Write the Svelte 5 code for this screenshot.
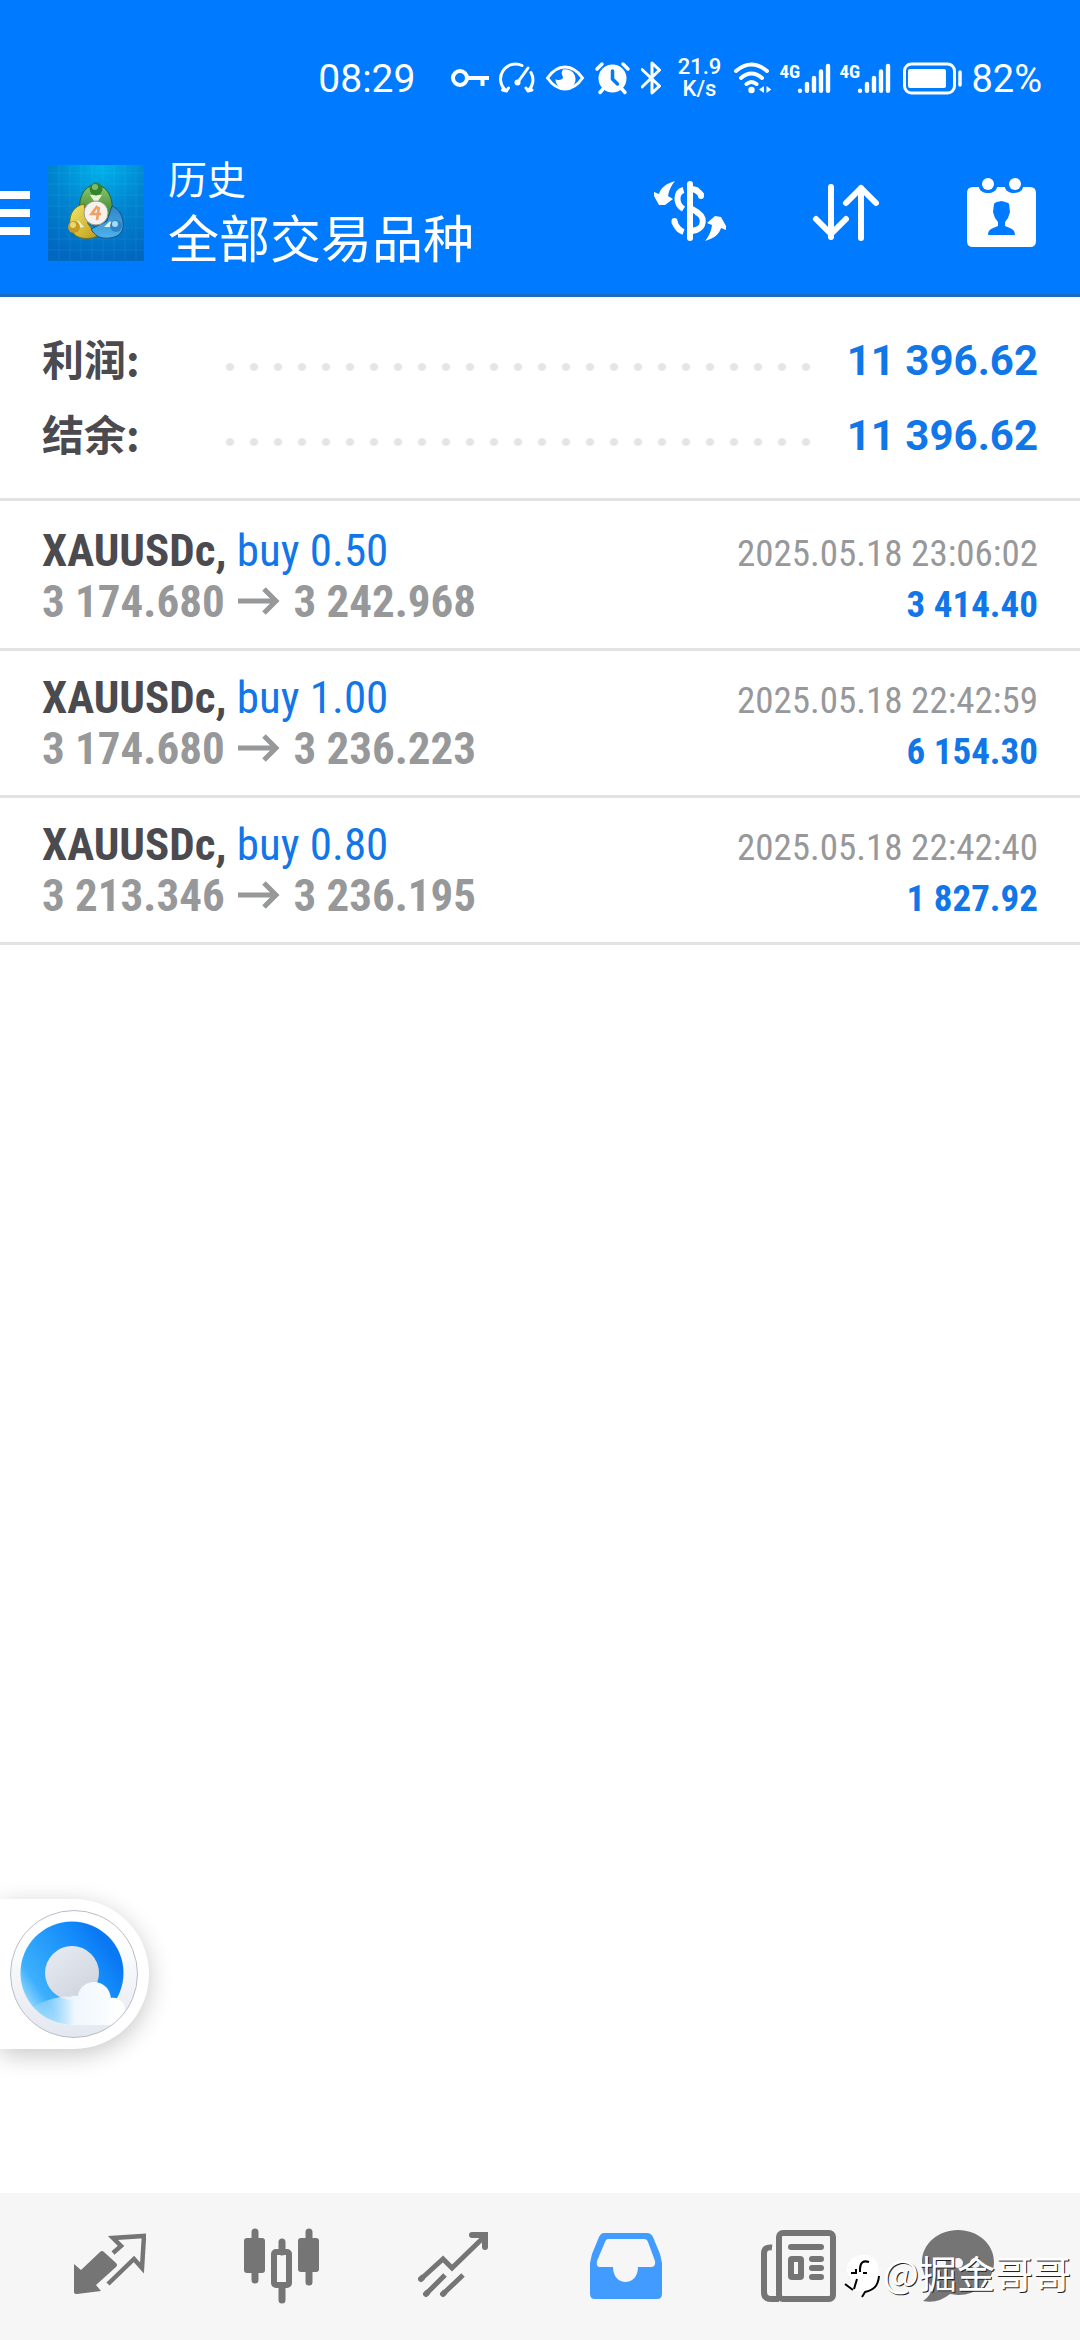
<script>
  const totals = [
    { label: '利润:', value: '11 396.62' },
    { label: '结余:', value: '11 396.62' }
  ];

  const deals = [
    { symbol: 'XAUUSDc,', side: 'buy 0.50', open: '3 174.680', close: '3 242.968', time: '2025.05.18 23:06:02', profit: '3 414.40' },
    { symbol: 'XAUUSDc,', side: 'buy 1.00', open: '3 174.680', close: '3 236.223', time: '2025.05.18 22:42:59', profit: '6 154.30' },
    { symbol: 'XAUUSDc,', side: 'buy 0.80', open: '3 213.346', close: '3 236.195', time: '2025.05.18 22:42:40', profit: '1 827.92' }
  ];
</script>

{#snippet signal()}
  <span class="signal">
    <span class="net">4G</span>
    <svg width="34" height="32" viewBox="0 0 34 32" fill="none" stroke="currentColor" stroke-width="4.4" stroke-linecap="round">
      <path d="M3 28.6v.2M10 22v6.8M17 16v12.8M24 9.500v19.300M31 4v24.800" />
    </svg>
  </span>
{/snippet}

<div class="app">
  <header>
    <div class="status">
      <time>08:29</time>
      <svg width="38" height="36" viewBox="0 0 38 36" fill="none" stroke="currentColor" stroke-width="4">
        <circle cx="9" cy="18" r="7" />
        <path d="M16 18h22M31.500 18v8" />
      </svg>
      <svg width="40" height="36" viewBox="0 0 40 36" fill="none" stroke="currentColor" stroke-width="3" stroke-linecap="round">
        <path d="M25 5.500A15 15 0 0 0 9.500 31M9.500 31l-4-1M9.500 31l2-3M34 12.500a15 15 0 0 1-3 18.500M31 31l4-1M31 31l-2-3" />
        <path d="M31 8L21 22" />
        <circle cx="20.500" cy="22.500" r="3" fill="currentColor" stroke="none" />
      </svg>
      <svg width="40" height="36" viewBox="0 0 40 36">
        <path d="M2.500 18C8 10 14 7 20 7s12 3 17.500 11C32 26 26 29 20 29S8 26 2.500 18z" fill="none" stroke="currentColor" stroke-width="3" />
        <path d="M18 9.500c-3 4 0 6 0 8-1 3-6 3-7.500 1.500A10 10 0 1 0 18 9.500z" fill="currentColor" />
      </svg>
      <svg width="40" height="36" viewBox="0 0 40 36">
        <circle cx="19.500" cy="18.500" r="14" fill="currentColor" />
        <path d="M4 9l5-5M30 4l5 5M10 29l-3 3.500M29 29l3 3.500" fill="none" stroke="currentColor" stroke-width="3.500" stroke-linecap="round" />
        <path d="M19.500 11v8l5 5" fill="none" stroke="#007aff" stroke-width="3.500" stroke-linecap="round" />
      </svg>
      <svg width="26" height="36" viewBox="0 0 26 36" fill="none" stroke="currentColor" stroke-width="3" stroke-linejoin="round" stroke-linecap="round">
        <path d="M1 9.500L18.500 26 11 33V3l7.500 7L1 27" />
      </svg>
      <span class="speed"><span>21.9</span><span>K/s</span></span>
      <svg width="40" height="36" viewBox="0 0 40 36" fill="none" stroke="currentColor" stroke-width="4" stroke-linecap="round">
        <path d="M5 11q15.500-13 31 0M10 18q10.500-9 21 0M15.500 24q5-4 10 0" />
        <circle cx="20.500" cy="30" r="3.200" fill="currentColor" stroke="none" />
        <path d="M33 26v7l-5-3.500zM35.500 26v7l5-3.500z" fill="currentColor" stroke="none" />
      </svg>
      {@render signal()}
      {@render signal()}
      <svg width="64" height="36" viewBox="0 0 64 36">
        <rect x="5.500" y="4" width="50" height="29" rx="7" fill="none" stroke="currentColor" stroke-width="3" />
        <rect x="9" y="9" width="38" height="19" rx="2" fill="currentColor" />
        <path d="M61 12v13" stroke="currentColor" stroke-width="3.500" stroke-linecap="round" />
      </svg>
      <span class="charge">82%</span>
    </div>

    <div class="bar">
      <button class="menu" aria-label="菜单">
        <svg width="30" height="45" viewBox="0 0 30 45" fill="currentColor">
          <path d="M0 0h30v8H0zM0 18h30v8H0zM0 36h30v8H0z" />
        </svg>
      </button>
      <svg class="logo" width="96" height="96" viewBox="0 0 96 96">
        <defs>
          <radialGradient id="sky" cx="0.550" cy="0" r="1">
            <stop offset="0" stop-color="#00b4ec" /><stop offset="0.500" stop-color="#0085d0" /><stop offset="1" stop-color="#0068c0" />
          </radialGradient>
          <linearGradient id="leaf" x2="0" y2="1"><stop stop-color="#8fc871" /><stop offset="1" stop-color="#2c7d24" /></linearGradient>
          <linearGradient id="gold" x2="1" y2="1"><stop stop-color="#f3e96a" /><stop offset="1" stop-color="#c09a18" /></linearGradient>
          <linearGradient id="azure" x2="0" y2="1"><stop stop-color="#2f86c4" /><stop offset="1" stop-color="#4fb1ec" /></linearGradient>
        </defs>
        <rect width="96" height="96" fill="url(#sky)" />
        <path d="M11 0v96M22 0v96M33 0v96M44 0v96M55 0v96M66 0v96M77 0v96M88 0v96M0 8h96M0 19h96M0 30h96M0 41h96M0 52h96M0 63h96M0 74h96M0 85h96" stroke="#8fe0ff" stroke-opacity="0.090" />
        <path d="M32 46c-2-16 6-26 16-26s18 12 16 28l-8 6-8-12-8 4z" fill="url(#leaf)" stroke="#25632a" />
        <path d="M36 39c-10 2-15 10-14 20 1 12 10 16 22 14l6-2-10-12z" fill="url(#gold)" stroke="#6d7325" />
        <path d="M64 41c8 3 12 12 11 22-2 8-10 11-20 10-6-1-10-5-12-9l16-8z" fill="url(#azure)" stroke="#15548e" />
        <path d="M42 30h12l-6 9zM30 55l-2 8 8-1zM62 56l4 6-10 0z" fill="#e7f2d8" />
        <circle cx="48" cy="24" r="6.500" fill="#34832d" /><circle cx="47" cy="22" r="3" fill="#81b86d" />
        <circle cx="26" cy="62" r="6" fill="#c79b21" /><circle cx="25" cy="60" r="3" fill="#ecd66d" />
        <circle cx="68" cy="61" r="6" fill="#2d83c5" /><circle cx="67" cy="59" r="3" fill="#a4dcfa" />
        <circle cx="48" cy="48" r="12" fill="#f5f1ed" stroke="#9c9a87" />
        <path d="M49.500 41l-6 8h9.500M51 42l-2 13" fill="none" stroke="#f0a060" stroke-width="2.600" />
      </svg>
      <h1><small>历史</small><span>全部交易品种</span></h1>
      <div class="actions">
        <button aria-label="货币">
          <svg width="72" height="72" viewBox="0 0 72 72">
            <path d="M21 6C11 9 7 13 5 19L0 17l0 4 5 9 6 0 8-6-5-3c1-6 3-10 7-15z" fill="currentColor" />
            <path d="M51 66c10-3 14-7 16-13l5 2 0-4-5-9-6-1-8 7 5 2c-1 7-3 11-7 16z" fill="currentColor" />
            <path d="M29.500 15C22 17 21 29 29.500 34M42 15q4 3 5.500 5.500M42 37c10 4 8 16 0 18M20.500 47q3 8 9 10" fill="none" stroke="currentColor" stroke-width="6" />
            <path d="M38 14l4 1M47 20v1M38 34l5 3M38 56l4-1M20.500 46v1" fill="none" stroke="currentColor" stroke-width="6" stroke-linecap="round" />
            <path d="M36 9v54" stroke="currentColor" stroke-width="6" stroke-linecap="round" />
          </svg>
        </button>
        <button aria-label="排序">
          <svg width="72" height="72" viewBox="0 0 72 72" fill="none" stroke="currentColor" stroke-width="6" stroke-linecap="round" stroke-linejoin="round">
            <path d="M21 12v50M6 44l15 15 15-15M51 63V13M36 28l15-15 15 15" />
          </svg>
        </button>
        <button aria-label="日期">
          <svg width="72" height="72" viewBox="0 0 72 72">
            <path d="M7 12h6c1 8 17 8 18 0h8c1 8 17 8 18 0h7q6 0 6 6v48q0 6-6 6H7q-6 0-6-6V18q0-6 6-6z" fill="currentColor" />
            <circle cx="22" cy="9" r="6" fill="currentColor" /><circle cx="49" cy="9" r="6" fill="currentColor" />
            <path d="M22 60c0-6 5-7 10-9v-4l-3-4-1-3-1-3 1-8c2-3 6-2 7-3 3 1 7 1 8 3l1 8-1 3-1 3-3 4v4c5 2 10 3 10 9z" fill="#007aff" />
          </svg>
        </button>
      </div>
    </div>
  </header>

  <main>
    <dl class="totals">
      {#each totals as total}
        <div>
          <dt>{total.label}</dt>
          <dd class="dots" aria-hidden="true"></dd>
          <dd class="sum">{total.value}</dd>
        </div>
      {/each}
    </dl>

    <ul class="deals">
      {#each deals as deal}
        <li>
          <div class="line">
            <span class="name"><b>{deal.symbol}</b> <span class="side">{deal.side}</span></span>
            <time>{deal.time}</time>
          </div>
          <div class="line">
            <span class="prices">{deal.open} <svg class="arrow" role="img" aria-label="→" width="42" height="28" viewBox="0 0 42 28" fill="none" stroke="currentColor" stroke-width="5"><path d="M0 14h38M26 2l12 12-12 12" /></svg> {deal.close}</span>
            <b class="profit">{deal.profit}</b>
          </div>
        </li>
      {/each}
    </ul>

    <button class="bubble" aria-label="浏览器">
      <svg width="130" height="130" viewBox="0 0 130 130">
        <defs>
          <linearGradient id="disc" x2="0" y2="1"><stop offset="0.200" stop-color="#fff" /><stop offset="1" stop-color="#e3e7ef" /></linearGradient>
          <linearGradient id="ring" x1="0.950" y1="0.400" x2="0.150" y2="0.950"><stop stop-color="#0a78f2" /><stop offset="0.200" stop-color="#128afa" /><stop offset="0.800" stop-color="#3cb0fd" /><stop offset="1" stop-color="#9fdcfe" /></linearGradient>
          <linearGradient id="hole" x2="0.700" y2="1"><stop stop-color="#e9ecf3" /><stop offset="1" stop-color="#cfd4de" /></linearGradient>
          <linearGradient id="cloud" x2="1" y2="0"><stop stop-color="#cdeeff" stop-opacity="0.100" /><stop offset="0.450" stop-color="#eff7fd" /><stop offset="1" stop-color="#fff" /></linearGradient>
          <clipPath id="round"><circle cx="65" cy="65" r="63" /></clipPath>
        </defs>
        <circle cx="65" cy="65" r="63.500" fill="url(#disc)" stroke="#b9bdc8" />
        <g clip-path="url(#round)">
          <circle cx="63" cy="64" r="51.500" fill="url(#ring)" />
          <circle cx="63" cy="64" r="27" fill="url(#hole)" />
          <path d="M24 98C34 92 52 86 61 88c3-2 7-1 8-1 2-18 30-20 33 2 8-2 15 6 14 13l-10 14H63q-24 0-39-18z" fill="url(#cloud)" />
        </g>
      </svg>
    </button>
  </main>

  <nav>
    <button aria-label="行情">
      <svg width="72" height="76" viewBox="0 0 72 76">
        <path d="M30 24q-2-2-4 0L7 42l-7-6v28q0 2 3 2l24-3-5-6 20-18q2-2 0-4z" fill="currentColor" />
        <path d="M39 25l8-7-8-8 31-2-2 32-8-9-26 25" fill="none" stroke="currentColor" stroke-width="4.500" />
      </svg>
    </button>
    <button aria-label="图表">
      <svg width="76" height="76" viewBox="0 0 76 76">
        <path d="M11 4v48M65 4v50M38 14v10M38 60v12" stroke="currentColor" stroke-width="7" stroke-linecap="round" />
        <rect x="0" y="10" width="21" height="35" rx="3" fill="currentColor" /><rect x="54" y="10" width="21" height="34" rx="3" fill="currentColor" />
        <rect x="30" y="24" width="15" height="33" rx="2" fill="none" stroke="currentColor" stroke-width="6" />
      </svg>
    </button>
    <button aria-label="交易">
      <svg width="72" height="76" viewBox="0 0 72 76" fill="none" stroke="currentColor" stroke-width="5">
        <path d="M3 51l22-20 9 9L67 8" /><path d="M3 51l1-1M54 7h13v12M8 66l1-1M25 66l1-1" stroke-linecap="round" stroke-width="6" />
        <path d="M8 66l19-19M25 66l20-19" />
      </svg>
    </button>
    <button class="active" aria-label="历史" aria-current="page">
      <svg width="72" height="76" viewBox="0 0 72 76">
        <path fill-rule="evenodd" d="M14 5h43q4 0 6 4l7 17 2 9v31q0 5-5 5H5q-5 0-5-5V35l2-9 7-17q2-4 5-4zm4 6q-2 0-3 3L7 33q-1 6 3 6h13c0 20 25 20 25 0h13q5 0 4-6L58 14q-1-3-4-3z" fill="currentColor" />
      </svg>
    </button>
    <button aria-label="新闻">
      <svg width="76" height="76" viewBox="0 0 76 76">
        <rect x="19" y="5" width="54" height="66" rx="4" fill="none" stroke="currentColor" stroke-width="6" />
        <path d="M12 19.500q-8-1-8 6V64q0 7 7 7h8" fill="none" stroke="currentColor" stroke-width="6" />
        <path d="M31 19h30M52 31h9M52 40h9M52 49h9" stroke="currentColor" stroke-width="6" stroke-linecap="round" />
        <rect x="31" y="31" width="10" height="18" rx="1" fill="none" stroke="currentColor" stroke-width="6" />
      </svg>
    </button>
    <button class="chat" aria-label="聊天">
      <svg width="72" height="76" viewBox="0 0 72 76">
        <path d="M36 2c20 0 36 14 36 32S57 67 36 67l-8-1Q16 76 1 73q8-5 9-14Q0 48 0 34C0 16 16 2 36 2z" fill="currentColor" />
        <circle cx="19" cy="35" r="5" fill="#f6f6f6" /><circle cx="36" cy="35" r="5" fill="#f6f6f6" /><circle cx="53" cy="35" r="5" fill="#f6f6f6" />
      </svg>
    </button>
    <p class="credit">
      <svg width="38" height="46" viewBox="0 0 38 46">
        <path d="M18 3C29 1 36 9 36 20c0 12-5 17-14 19l-3 5-1-5C9 40 3 37 1 30c5 4 8 1 8-3C-2 18 6 5 18 3z" fill="#fff" />
        <path d="M36 24c-1 11-6 14-14 16l-3 5M2 32l8 6" fill="none" stroke="#000" stroke-width="2" />
        <path d="M26 10c-6-2-9 1-9 7v3M8 21h5v-4M20 21h4M14 27l-3 10" fill="none" stroke="#000" stroke-width="2" />
      </svg>
      <span>@掘金哥哥</span>
    </p>
  </nav>
</div>

<style>
  :global(body) {
    margin: 0;
    background: #fff;
  }

  .app {
    display: flex;
    flex-direction: column;
    min-height: 100vh;
    font-family: Roboto, 'Noto Sans CJK SC', sans-serif;
    color: #4a4a4f;
  }

  button {
    display: flex;
    align-items: center;
    justify-content: center;
    padding: 0;
    border: 0;
    background: none;
    color: inherit;
    font: inherit;
    cursor: pointer;
  }

  svg {
    display: block;
    flex: none;
  }

  header {
    background: #007aff;
    border-bottom: 3px solid #1a6bc4;
    color: #fff;
  }

  .status {
    display: flex;
    align-items: center;
    justify-content: flex-end;
    gap: 8px;
    height: 36px;
    padding: 60px 38px 0 0;
    line-height: 38px;
  }

  .status time {
    margin: 2px 28px 0 0;
    font-size: 39px;
  }

  .charge {
    margin-top: 2px;
    font-size: 38px;
  }

  .speed {
    display: flex;
    flex-direction: column;
    align-items: center;
    width: 48px;
    font-size: 22px;
    font-weight: 500;
    line-height: 22px;
  }

  .signal {
    display: flex;
    align-items: flex-start;
    justify-content: space-between;
    width: 52px;
  }

  .net {
    width: 18px;
    font: bold 19px/20px 'Roboto Condensed', 'Liberation Sans Narrow', sans-serif;
  }

  .bar {
    display: flex;
    align-items: center;
    box-sizing: border-box;
    height: 198px;
    padding: 36px 42px 0 0;
  }

  .logo {
    margin: 0 24px 0 18px;
  }

  h1 {
    display: flex;
    flex-direction: column;
    flex: 1;
    margin: 0 0 4px;
    font-size: 51px;
    font-weight: 400;
    line-height: 60px;
  }

  h1 small {
    font-size: 39px;
  }

  .actions {
    display: flex;
    gap: 84px;
    margin-bottom: 4px;
  }

  main {
    position: relative;
    flex: 1;
  }

  .totals {
    margin: 0;
    padding: 26px 42px 25px;
    border-bottom: 3px solid #e3e3e3;
  }

  .totals div {
    display: flex;
    align-items: center;
    height: 75px;
  }

  dt {
    width: 176px;
    margin-bottom: 6px;
    font-family: 'Noto Sans CJK SC', sans-serif;
    font-size: 42px;
    font-weight: 700;
    line-height: 60px;
  }

  dd {
    margin: 0;
  }

  .dots {
    flex: 1;
    height: 8px;
    margin: 13px 32px 0 0;
    background: radial-gradient(circle, #e4e4e4 3px, transparent 5px) 0 0 / 24px 8px repeat-x;
  }

  .sum {
    color: #1176e8;
    font-size: 42px;
    font-weight: 700;
  }

  .deals {
    margin: 0;
    padding: 3px 0 0;
    list-style: none;
    font-family: 'Roboto Condensed', 'Liberation Sans Narrow', sans-serif;
  }

  li {
    padding: 21px 42px;
    border-bottom: 3px solid #e3e3e3;
  }

  .line {
    display: flex;
    align-items: baseline;
    justify-content: space-between;
    height: 51px;
    line-height: 51px;
    white-space: pre;
  }

  .name,
  .prices {
    font-size: 45px;
  }

  .prices {
    color: #97989a;
    font-weight: 700;
  }

  .arrow {
    display: inline-block;
    margin: 0 3px;
    vertical-align: 2px;
  }

  .side,
  .profit {
    color: #1176e8;
  }

  .line time,
  .profit {
    font-size: 37px;
  }

  .line time {
    color: #97989a;
  }

  .bubble {
    position: absolute;
    bottom: 144px;
    left: 0;
    width: 149px;
    height: 150px;
    padding-right: 2px;
    border-radius: 0 75px 75px 0;
    background: #fff;
    box-shadow: 0 6px 24px rgb(0 0 0 / 0.22);
  }

  nav {
    position: relative;
    display: grid;
    grid-template-columns: repeat(6, 1fr);
    box-sizing: border-box;
    height: 147px;
    padding: 0 24px 2px;
    background: #f6f6f6;
    color: #757575;
  }

  .active {
    color: #429bff;
  }

  .chat {
    padding-right: 24px;
  }

  .credit {
    position: absolute;
    right: 9px;
    bottom: 42px;
    display: flex;
    align-items: center;
    gap: 2px;
    margin: 0;
    color: #fff;
    font-size: 38px;
    line-height: 46px;
    font-family: 'Noto Sans CJK SC', sans-serif;
    text-shadow: 1px 1px 0 #222;
  }

  .credit svg {
    margin-top: 6px;
  }
</style>
